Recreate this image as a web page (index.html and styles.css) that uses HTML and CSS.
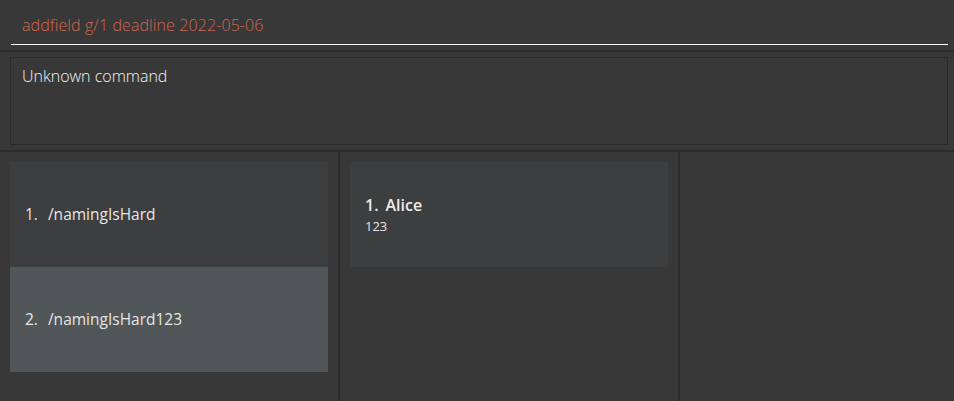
FILE: index.html
```html
<!DOCTYPE html>
<html>
<head>
<meta charset="utf-8">
<link rel="stylesheet" href="styles.css">
</head>
<body>
<div class="app">
  <div class="command-box">
    <div class="command-field error">addfield g/1 deadline 2022-05-06</div>
  </div>
  <div class="sep"></div>
  <div class="result-wrap">
    <div class="result-box">Unknown command</div>
  </div>
  <div class="sep"></div>
  <div class="panels">
    <div class="panel left">
      <div class="cell even"><span class="idx">1.</span><span>/namingIsHard</span></div>
      <div class="cell odd"><span class="idx">2.</span><span>/namingIsHard123</span></div>
    </div>
    <div class="divider"></div>
    <div class="panel middle">
      <div class="card">
        <div class="card-title"><span class="idx">1.</span><span>Alice</span></div>
        <div class="card-sub">123</div>
      </div>
    </div>
    <div class="divider"></div>
    <div class="panel right"></div>
  </div>
</div>
</body>
</html>
```
FILE: styles.css
```css
html, body {
  margin: 0;
  padding: 0;
  background: #383838;
  width: 954px;
  height: 401px;
  overflow: hidden;
  font-family: "Open Sans", "Noto Sans", sans-serif;
}
.app {
  display: flex;
  flex-direction: column;
  height: 401px;
}
.command-box {
  height: 50px;
  padding-left: 11px;
  padding-right: 6px;
  box-sizing: border-box;
}
.command-field {
  height: 30px;
  padding-top: 14px;
  border-bottom: 1px solid #ffffff;
  padding-left: 11px;
  font-size: 16px;
  font-weight: 300;
  line-height: 22px;
  letter-spacing: 0.1px;
}
.command-field.error {
  color: #d06651;
}
.sep {
  height: 2px;
  background: #2c2c2c;
}
.result-wrap {
  padding: 5px 6px 5px 10px;
  height: 98px;
  box-sizing: border-box;
}
.result-box {
  height: 88px;
  box-sizing: border-box;
  border: 1px solid #2a2a2a;
  padding: 7px 11px;
  color: #f4f4f4;
  font-size: 16px;
  font-weight: 300;
  line-height: 22px;
}
.panels {
  flex: 1;
  display: flex;
}
.panel {
  padding: 10px;
  box-sizing: border-box;
}
.panel.left, .panel.middle {
  width: 338px;
}
.panel.right {
  flex: 1;
}
.divider {
  width: 2px;
  background: #2c2c2c;
}
.cell {
  height: 105px;
  box-sizing: border-box;
  padding-bottom: 2px;
  display: flex;
  align-items: center;
  padding-left: 15px;
  color: #e6e6e6;
  font-size: 15.5px;
  font-weight: 500;
}
.cell.even { background: #3c3e3f; }
.cell.odd { background: #515658; }
.idx {
  margin-right: 10px;
}
.card {
  height: 105px;
  background: #3c3e3f;
  box-sizing: border-box;
  padding: 32px 15px 0;
  color: #ececec;
}
.card-title {
  font-size: 16px;
  font-weight: 600;
  line-height: 22px;
}
.card-title .idx {
  margin-right: 7px;
}
.card-sub {
  font-size: 13px;
  line-height: 20px;
  color: #e4e4e4;
}
```
